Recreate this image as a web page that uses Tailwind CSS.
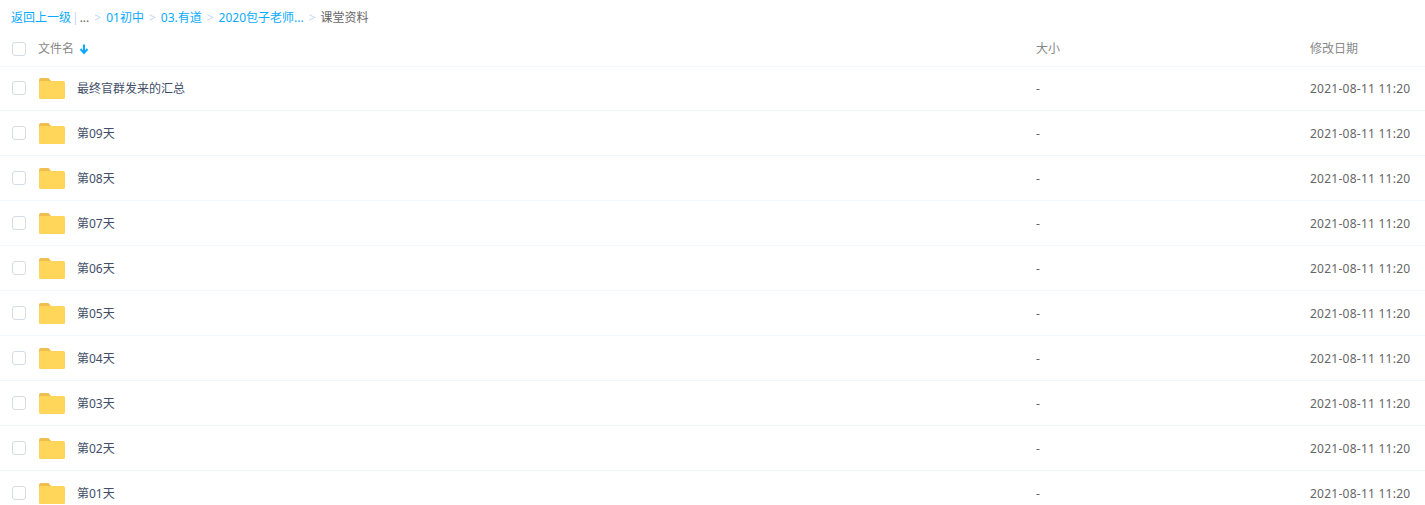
<!DOCTYPE html>
<html lang="zh-CN">
<head>
    <meta charset="UTF-8">
    <title>课堂资料</title>
    <script src="https://cdn.jsdelivr.net/npm/@tailwindcss/browser@4"></script>
</head>
<body class="bg-white overflow-hidden font-['Noto_Sans','Noto_Sans_CJK_SC',sans-serif] text-xs">
    <nav class="flex items-center h-[34px] pt-[2px] pl-[11px] text-[#09aaff] whitespace-nowrap">
        <a href="#">返回上一级</a>
        <span class="ml-[1px] text-[#c5d8f3]">|</span>
        <span class="ml-[1px] text-[#666]">...</span>
        <span class="mx-[5px] text-[#c5d8f3]">&gt;</span>
        <a href="#">01初中</a>
        <span class="mx-[5px] text-[#c5d8f3]">&gt;</span>
        <a href="#">03.有道</a>
        <span class="mx-[5px] text-[#c5d8f3]">&gt;</span>
        <a href="#">2020包子老师...</a>
        <span class="mx-[5px] text-[#c5d8f3]">&gt;</span>
        <span class="text-[#666]">课堂资料</span>
    </nav>

    <div class="flex items-center h-[33px] pb-[2px] border-b border-[#f2f6fd] text-[#888]">
        <span class="ml-[12px] w-[14px] h-[14px] rounded-[3px] border border-[#d6dce6]"></span>
        <div class="ml-[12px] w-[998px] flex items-center gap-[5px]">
            文件名
            <svg width="10" height="12" viewBox="0 0 10 12" class="text-[#09aaff]"><path d="M5 1.500v8M1.500 6l3.500 4 3.500-4" fill="none" stroke="currentColor" stroke-width="2"/></svg>
        </div>
        <div class="w-[274px]">大小</div>
        <div>修改日期</div>
    </div>

    <div id="rows">
        <div class="flex items-center h-[44px] border-b border-[#f2f6fd]">
            <span class="ml-[12px] mb-[1px] w-[14px] h-[14px] rounded-[3px] border border-[#d6dce6]"></span>
            <svg width="26" height="21" viewBox="0 0 26 21" class="ml-[13px]"><path d="M0 2a2 2 0 0 1 2-2h7.500l2.500 3v3H0z" fill="#f0bd4f"/><rect y="3" width="26" height="18" rx="1.500" fill="#ffd659"/></svg>
            <div class="ml-[12px] w-[959px] text-[#424e67]">最终官群发来的汇总</div>
            <div class="w-[274px] text-[#666]">-</div>
            <div class="text-[#666] tracking-[0.25px]">2021-08-11 11:20</div>
        </div>
        <div class="flex items-center h-[45px] border-b border-[#f2f6fd]">
            <span class="ml-[12px] w-[14px] h-[14px] rounded-[3px] border border-[#d6dce6]"></span>
            <svg width="26" height="21" viewBox="0 0 26 21" class="ml-[13px] mt-[1px]"><path d="M0 2a2 2 0 0 1 2-2h7.500l2.500 3v3H0z" fill="#f0bd4f"/><rect y="3" width="26" height="18" rx="1.500" fill="#ffd659"/></svg>
            <div class="ml-[12px] w-[959px] mt-[2px] text-[#424e67]">第09天</div>
            <div class="w-[274px] mt-[2px] text-[#666]">-</div>
            <div class="mt-[2px] text-[#666] tracking-[0.25px]">2021-08-11 11:20</div>
        </div>
        <div class="flex items-center h-[45px] border-b border-[#f2f6fd]">
            <span class="ml-[12px] w-[14px] h-[14px] rounded-[3px] border border-[#d6dce6]"></span>
            <svg width="26" height="21" viewBox="0 0 26 21" class="ml-[13px] mt-[1px]"><path d="M0 2a2 2 0 0 1 2-2h7.500l2.500 3v3H0z" fill="#f0bd4f"/><rect y="3" width="26" height="18" rx="1.500" fill="#ffd659"/></svg>
            <div class="ml-[12px] w-[959px] mt-[2px] text-[#424e67]">第08天</div>
            <div class="w-[274px] mt-[2px] text-[#666]">-</div>
            <div class="mt-[2px] text-[#666] tracking-[0.25px]">2021-08-11 11:20</div>
        </div>
        <div class="flex items-center h-[45px] border-b border-[#f2f6fd]">
            <span class="ml-[12px] w-[14px] h-[14px] rounded-[3px] border border-[#d6dce6]"></span>
            <svg width="26" height="21" viewBox="0 0 26 21" class="ml-[13px] mt-[1px]"><path d="M0 2a2 2 0 0 1 2-2h7.500l2.500 3v3H0z" fill="#f0bd4f"/><rect y="3" width="26" height="18" rx="1.500" fill="#ffd659"/></svg>
            <div class="ml-[12px] w-[959px] mt-[2px] text-[#424e67]">第07天</div>
            <div class="w-[274px] mt-[2px] text-[#666]">-</div>
            <div class="mt-[2px] text-[#666] tracking-[0.25px]">2021-08-11 11:20</div>
        </div>
        <div class="flex items-center h-[45px] border-b border-[#f2f6fd]">
            <span class="ml-[12px] w-[14px] h-[14px] rounded-[3px] border border-[#d6dce6]"></span>
            <svg width="26" height="21" viewBox="0 0 26 21" class="ml-[13px] mt-[1px]"><path d="M0 2a2 2 0 0 1 2-2h7.500l2.500 3v3H0z" fill="#f0bd4f"/><rect y="3" width="26" height="18" rx="1.500" fill="#ffd659"/></svg>
            <div class="ml-[12px] w-[959px] mt-[2px] text-[#424e67]">第06天</div>
            <div class="w-[274px] mt-[2px] text-[#666]">-</div>
            <div class="mt-[2px] text-[#666] tracking-[0.25px]">2021-08-11 11:20</div>
        </div>
        <div class="flex items-center h-[45px] border-b border-[#f2f6fd]">
            <span class="ml-[12px] w-[14px] h-[14px] rounded-[3px] border border-[#d6dce6]"></span>
            <svg width="26" height="21" viewBox="0 0 26 21" class="ml-[13px] mt-[1px]"><path d="M0 2a2 2 0 0 1 2-2h7.500l2.500 3v3H0z" fill="#f0bd4f"/><rect y="3" width="26" height="18" rx="1.500" fill="#ffd659"/></svg>
            <div class="ml-[12px] w-[959px] mt-[2px] text-[#424e67]">第05天</div>
            <div class="w-[274px] mt-[2px] text-[#666]">-</div>
            <div class="mt-[2px] text-[#666] tracking-[0.25px]">2021-08-11 11:20</div>
        </div>
        <div class="flex items-center h-[45px] border-b border-[#f2f6fd]">
            <span class="ml-[12px] w-[14px] h-[14px] rounded-[3px] border border-[#d6dce6]"></span>
            <svg width="26" height="21" viewBox="0 0 26 21" class="ml-[13px] mt-[1px]"><path d="M0 2a2 2 0 0 1 2-2h7.500l2.500 3v3H0z" fill="#f0bd4f"/><rect y="3" width="26" height="18" rx="1.500" fill="#ffd659"/></svg>
            <div class="ml-[12px] w-[959px] mt-[2px] text-[#424e67]">第04天</div>
            <div class="w-[274px] mt-[2px] text-[#666]">-</div>
            <div class="mt-[2px] text-[#666] tracking-[0.25px]">2021-08-11 11:20</div>
        </div>
        <div class="flex items-center h-[45px] border-b border-[#f2f6fd]">
            <span class="ml-[12px] w-[14px] h-[14px] rounded-[3px] border border-[#d6dce6]"></span>
            <svg width="26" height="21" viewBox="0 0 26 21" class="ml-[13px] mt-[1px]"><path d="M0 2a2 2 0 0 1 2-2h7.500l2.500 3v3H0z" fill="#f0bd4f"/><rect y="3" width="26" height="18" rx="1.500" fill="#ffd659"/></svg>
            <div class="ml-[12px] w-[959px] mt-[2px] text-[#424e67]">第03天</div>
            <div class="w-[274px] mt-[2px] text-[#666]">-</div>
            <div class="mt-[2px] text-[#666] tracking-[0.25px]">2021-08-11 11:20</div>
        </div>
        <div class="flex items-center h-[45px] border-b border-[#f2f6fd]">
            <span class="ml-[12px] w-[14px] h-[14px] rounded-[3px] border border-[#d6dce6]"></span>
            <svg width="26" height="21" viewBox="0 0 26 21" class="ml-[13px] mt-[1px]"><path d="M0 2a2 2 0 0 1 2-2h7.500l2.500 3v3H0z" fill="#f0bd4f"/><rect y="3" width="26" height="18" rx="1.500" fill="#ffd659"/></svg>
            <div class="ml-[12px] w-[959px] mt-[2px] text-[#424e67]">第02天</div>
            <div class="w-[274px] mt-[2px] text-[#666]">-</div>
            <div class="mt-[2px] text-[#666] tracking-[0.25px]">2021-08-11 11:20</div>
        </div>
        <div class="flex items-center h-[45px] border-b border-[#f2f6fd]">
            <span class="ml-[12px] w-[14px] h-[14px] rounded-[3px] border border-[#d6dce6]"></span>
            <svg width="26" height="21" viewBox="0 0 26 21" class="ml-[13px] mt-[1px]"><path d="M0 2a2 2 0 0 1 2-2h7.500l2.500 3v3H0z" fill="#f0bd4f"/><rect y="3" width="26" height="18" rx="1.500" fill="#ffd659"/></svg>
            <div class="ml-[12px] w-[959px] mt-[2px] text-[#424e67]">第01天</div>
            <div class="w-[274px] mt-[2px] text-[#666]">-</div>
            <div class="mt-[2px] text-[#666] tracking-[0.25px]">2021-08-11 11:20</div>
        </div>
    </div>
</body>
</html>
